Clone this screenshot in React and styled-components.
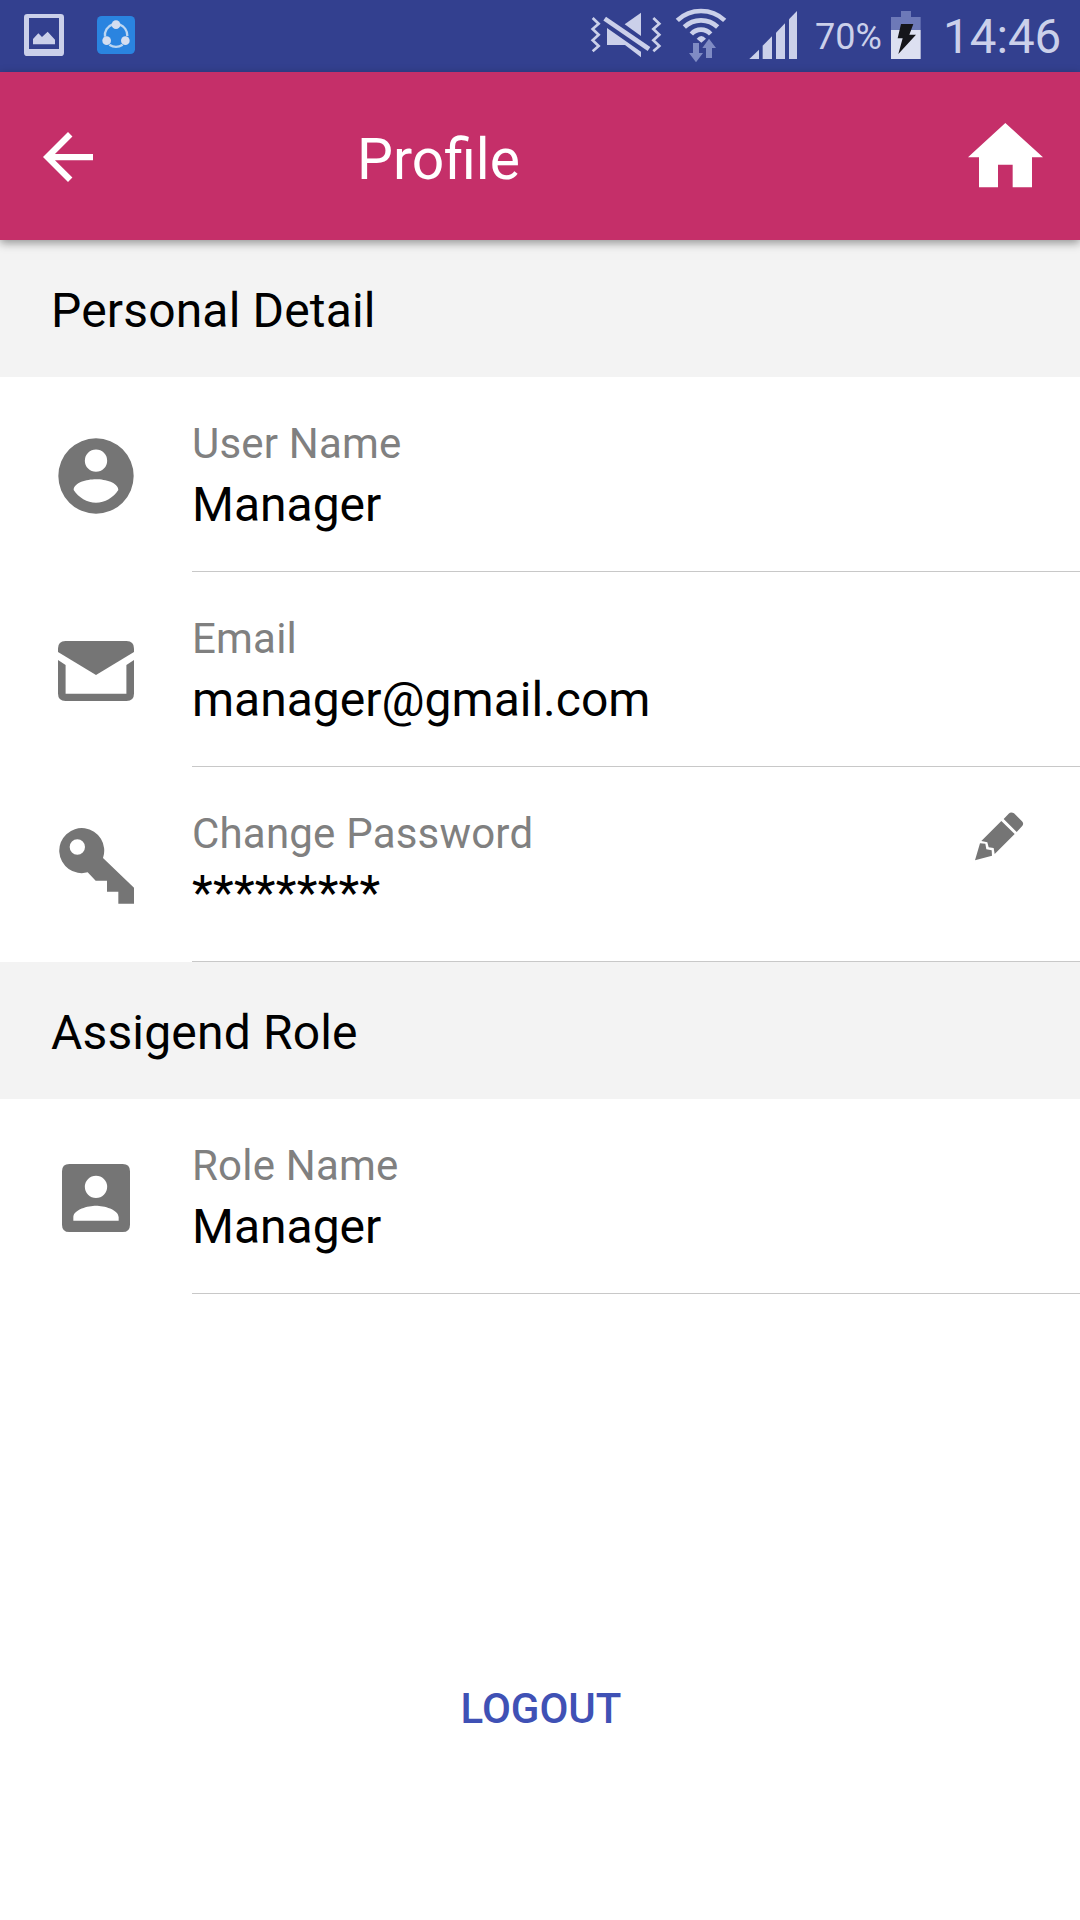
import React from 'react';
import styled, { createGlobalStyle } from 'styled-components';

const GlobalStyle = createGlobalStyle`
  * {
    box-sizing: border-box;
  }

  body {
    margin: 0;
    background: #fff;
    font-family: Roboto, sans-serif;
  }
`;

const Page = styled.div`
  display: flex;
  flex-direction: column;
  width: 1080px;
  height: 1920px;
  overflow: hidden;
  background: #fff;
`;

const StatusBar = styled.div`
  display: flex;
  align-items: center;
  height: 72px;
  padding: 0 21px 2px 24px;
  background: #33408f;
  color: #cbd0ea;
`;

const StatusGroup = styled.div`
  display: flex;
  align-items: center;
  gap: ${props => props.$gap || 0}px;
  margin-left: ${props => (props.$right ? 'auto' : 0)};
`;

const StatusText = styled.span`
  width: ${props => props.$width}px;
  padding-top: 4px;
  font-size: ${props => props.$size}px;
  line-height: 56px;
  white-space: nowrap;
`;

const Toolbar = styled.header`
  position: relative;
  display: flex;
  align-items: center;
  flex-shrink: 0;
  height: 168px;
  padding: 0 37px 0 43px;
  background: #c52f69;
  color: #fff;
  box-shadow: 0 3px 9px rgba(0, 0, 0, 0.4);
`;

const Title = styled.h1`
  flex: 1;
  margin: 0;
  padding: 7px 0 0 264px;
  font-size: 57px;
  font-weight: 400;
  line-height: 70px;
`;

const IconButton = styled.button`
  display: flex;
  padding: ${props => props.$top || 0}px 0 ${props => props.$bottom || 0}px;
  border: 0;
  background: none;
  color: inherit;
`;

const SectionTitle = styled.h2`
  height: 137px;
  margin: 0;
  padding: 40px 51px 0;
  background: #f3f3f3;
  color: #000;
  font-size: 48px;
  font-weight: 400;
  letter-spacing: 0.17px;
  line-height: 62px;
`;

const Row = styled.div`
  display: flex;
  height: 195px;
`;

const RowIcon = styled.div`
  display: flex;
  align-items: center;
  justify-content: center;
  width: 192px;
  padding: 3px 0 1px;
  color: #757575;
`;

const RowBody = styled.div`
  display: flex;
  flex: 1;
  justify-content: space-between;
  padding: 40px 56px 0 0;
  border-bottom: 1px solid #c8c8c8;
`;

const Label = styled.div`
  color: #808080;
  font-size: 42px;
  letter-spacing: 0.2px;
  line-height: 54px;
`;

const Value = styled.div`
  padding-top: ${props => (props.$masked ? 0 : 1)}px;
  color: #000;
  font-size: 48px;
  letter-spacing: ${props => (props.$masked ? 0.27 : 0)}px;
  line-height: ${props => (props.$masked ? 64 : 66)}px;
`;

const EditButton = styled(IconButton)`
  align-self: flex-start;
  margin-top: 5px;
  color: #757575;
`;

const LogoutButton = styled.button`
  align-self: center;
  margin-top: 385px;
  padding: 0 0 0 2px;
  border: 0;
  background: none;
  color: #3f51b5;
  font-family: inherit;
  font-size: 42px;
  font-weight: 500;
  line-height: 60px;
`;

const Icon = ({ width, height, viewBox, children }) => (
  <svg
    width={width}
    height={height}
    viewBox={viewBox}
    fill="currentColor"
    display="block"
  >
    {children}
  </svg>
);

const PictureIcon = () => (
  <Icon width="40" height="42" viewBox="72 42 120 126">
    <path
      fillRule="evenodd"
      d="M82 42H182Q192 42 192 52V158Q192 168 182 168H82Q72 168 72 158V52Q72 42 82 42ZM87 54V147H177V54Z"
    />
    <path d="M99 133V117L115 100L126 111L143 95L165 119V133Z" />
  </Icon>
);

const ShareIcon = () => (
  <Icon width="38" height="38" viewBox="291 48 114 114">
    <rect x="291" y="48" width="114" height="114" rx="14" fill="#2a84e0" />
    <g fill="none" stroke="#bcd6f2" strokeWidth="7">
      <path d="M315 110A34 34 0 0 1 338 73" />
      <path d="M358 73A36 36 0 0 1 382 108" />
      <path d="M328 134A36 36 0 0 0 368 134" />
    </g>
    <g fill="#d5def0">
      <circle cx="348" cy="74" r="13" />
      <circle cx="320" cy="122" r="13" />
      <circle cx="376" cy="122" r="13" />
    </g>
  </Icon>
);

const MuteIcon = () => (
  <Icon width="72" height="46" viewBox="60 36 216 138">
    <path d="M164 73L213 38V108Z" />
    <path d="M111 84L213 155V172L165 135H111Z" />
    <path d="M104 56L238 147" stroke="#33408f" strokeWidth="26" />
    <path d="M104 56L237 147" stroke="currentColor" strokeWidth="14" />
    <g fill="none" stroke="currentColor" strokeWidth="8">
      <path d="M68 54L86 71L68 87L86 104L68 121L86 138L68 154" />
      <path d="M250 54L268 71L250 87L268 104L250 121L268 138L250 154" />
    </g>
  </Icon>
);

const WifiIcon = () => (
  <Icon width="52" height="55" viewBox="315 21 156 165">
    <g fill="none" stroke="currentColor" strokeWidth="14">
      <path d="M322 58Q352 30 393 30T464 58" />
      <path d="M343 78Q364 58 393 58T443 78" />
      <path d="M364 99Q376 86 393 86T422 99" />
    </g>
    <path d="M380 113Q394 97 408 113L394 125Z" />
    <g fill="#7f8bc4">
      <path d="M369 126H387V156H399L378 184L357 156H369Z" />
      <path d="M408 171V141H397L417 113L438 141H426V171Z" />
    </g>
  </Icon>
);

const SignalIcon = () => (
  <Icon width="49" height="49" viewBox="537 33 147 147">
    <path d="M538 177L567 149V177Z" />
    <path d="M578 177V137L606 109V177Z" />
    <path d="M618 177V98L645 70V177Z" />
    <path d="M657 177V58L681 33V177Z" />
  </Icon>
);

const BatteryIcon = () => (
  <Icon width="31" height="49" viewBox="270 30 93 147">
    <path fill="#6d79b8" d="M303 30H333V48H362V87H273V48H303Z" />
    <path fill="#dde0f1" d="M273 87H362V174H273Z" />
    <path fill="#15151a" d="M303 69H340L328 101H348L295 159L308 112H293Z" />
  </Icon>
);

const BackIcon = () => (
  <Icon width="50" height="50" viewBox="4 4 16 16">
    <path d="M20 11H7.83l5.59-5.59L12 4l-8 8 8 8 1.41-1.41L7.83 13H20v-2z" />
  </Icon>
);

const HomeIcon = () => (
  <Icon width="75" height="65" viewBox="0 0 225 195">
    <path d="M112 0L225 103H192V193H134V125H90V193H33V103H0Z" />
  </Icon>
);

const ContactIcon = () => (
  <Icon width="76" height="76" viewBox="-1 -1 228 228">
    <path
      fillRule="evenodd"
      d="M113 0A113 113 0 1 1 113 226A113 113 0 1 1 113 0ZM113 33.500A33.500 33.500 0 1 0 113 100.500A33.500 33.500 0 1 0 113 33.500ZM46 155C61 178 86 193 113 193S165 178 180 155C179 133 142 123 113 123S47 133 46 155Z"
    />
  </Icon>
);

const MailIcon = () => (
  <Icon width="76" height="60" viewBox="0 0 76 60">
    <path d="M0 7.500Q0 0 7.500 0H68.500Q76 0 76 7.500V11L38 34L0 11Z" />
    <path d="M0 19L7.600 24V52.700H68.400V24L76 19V52.500Q76 60 68.500 60H7.500Q0 60 0 52.500Z" />
  </Icon>
);

const KeyIcon = () => (
  <Icon width="76" height="76" viewBox="-1 -1 228 228">
    <path
      fillRule="evenodd"
      d="M134 89L227 178V226H180V190H146V157H112L88 132A67.500 67.500 0 1 1 134 89ZM57 33A23 23 0 1 0 57 79A23 23 0 1 0 57 33Z"
    />
  </Icon>
);

const RoleIcon = () => (
  <Icon width="68" height="68" viewBox="96 552 204 204">
    <path
      fillRule="evenodd"
      d="M118 552H278Q300 552 300 574V734Q300 756 278 756H118Q96 756 96 734V574Q96 552 118 552ZM198 587A33.500 33.500 0 1 0 198 654A33.500 33.500 0 1 0 198 587ZM130 722H266V712C266 688 221 677 198 677S130 688 130 712Z"
    />
  </Icon>
);

const PencilIcon = () => (
  <Icon width="49" height="49" viewBox="0 0 147 147">
    <path d="M0 145L15 94L31 95L34 112L50 115L51 131Z" />
    <path d="M79 27L119 66L59 126L56 108L41 106L37 91L19 87Z" />
    <path d="M86 21L101 5Q108 -2 117 4L141 28Q148 35 141 43L125 60Z" />
  </Icon>
);

const DetailRow = ({ icon, label, value, masked, onEdit }) => (
  <Row>
    <RowIcon>{icon}</RowIcon>
    <RowBody>
      <div>
        <Label>{label}</Label>
        <Value $masked={masked}>{value}</Value>
      </div>
      {onEdit && (
        <EditButton aria-label="Edit" onClick={onEdit}>
          <PencilIcon />
        </EditButton>
      )}
    </RowBody>
  </Row>
);

const App = () => (
  <Page>
    <GlobalStyle />
    <StatusBar>
      <StatusGroup $gap={33}>
        <PictureIcon />
        <ShareIcon />
      </StatusGroup>
      <StatusGroup $right $gap={22}>
        <StatusGroup $gap={13}>
          <MuteIcon />
          <WifiIcon />
        </StatusGroup>
        <StatusGroup $gap={17}>
          <SignalIcon />
          <StatusText $size={36} $width={75}>
            70%
          </StatusText>
        </StatusGroup>
      </StatusGroup>
      <StatusGroup $gap={22}>
        <BatteryIcon />
        <StatusText $size={47.5} $width={116}>
          14:46
        </StatusText>
      </StatusGroup>
    </StatusBar>
    <Toolbar>
      <IconButton aria-label="Back" $top={2}>
        <BackIcon />
      </IconButton>
      <Title>Profile</Title>
      <IconButton aria-label="Home" $bottom={2}>
        <HomeIcon />
      </IconButton>
    </Toolbar>
    <SectionTitle>Personal Detail</SectionTitle>
    <DetailRow icon={<ContactIcon />} label="User Name" value="Manager" />
    <DetailRow icon={<MailIcon />} label="Email" value="manager@gmail.com" />
    <DetailRow
      icon={<KeyIcon />}
      label="Change Password"
      value="*********"
      masked
      onEdit={() => {}}
    />
    <SectionTitle>Assigend Role</SectionTitle>
    <DetailRow icon={<RoleIcon />} label="Role Name" value="Manager" />
    <LogoutButton>LOGOUT</LogoutButton>
  </Page>
);

export default App;
